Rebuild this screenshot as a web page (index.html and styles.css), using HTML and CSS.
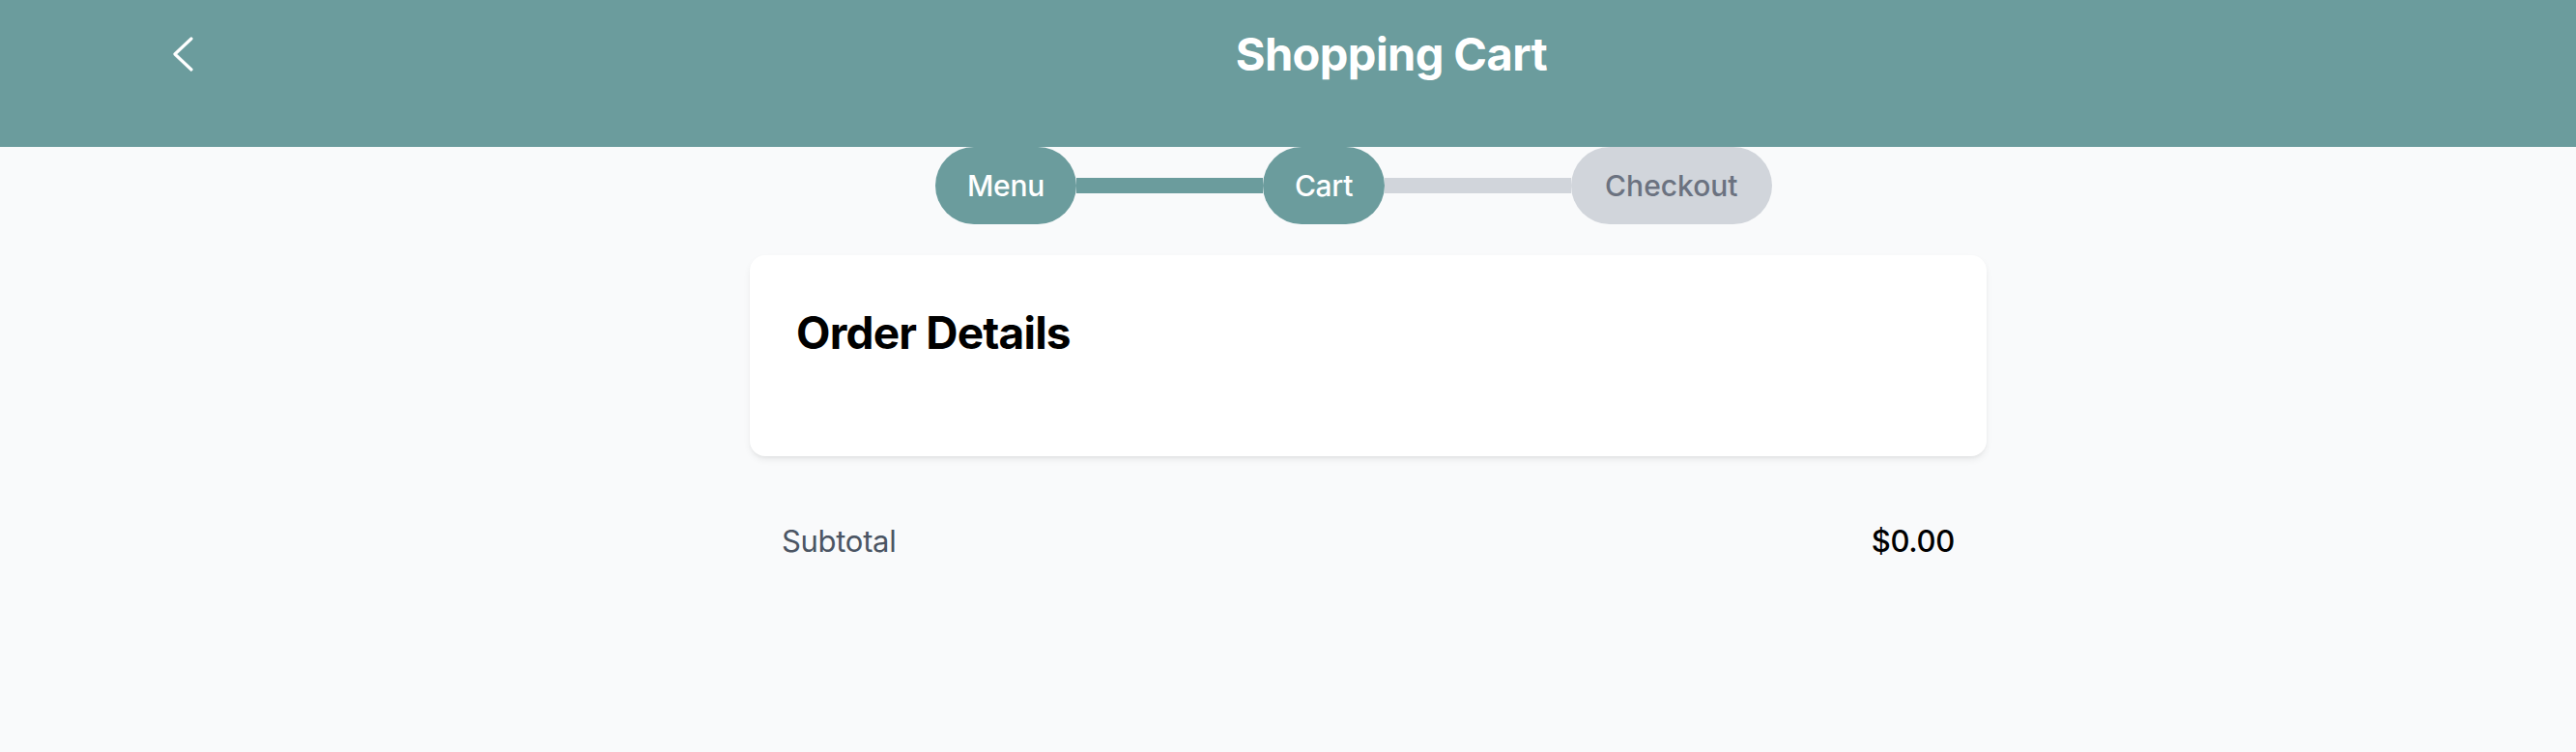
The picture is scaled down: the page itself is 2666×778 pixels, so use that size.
FILE: index.html
```html
<!DOCTYPE html>
<html lang="en">
<head>
<meta charset="utf-8">
<title>Shopping Cart</title>
<link rel="stylesheet" href="styles.css">
</head>
<body>
<header class="topbar">
  <div class="topbar-row">
    <button class="back-btn" aria-label="Back">
      <svg width="24" height="36" viewBox="0 0 24 36" fill="none" stroke="#fff" stroke-width="3.2" stroke-linecap="round" stroke-linejoin="round">
        <polyline points="20,2 3,18 20,34"/>
      </svg>
    </button>
    <h1 class="title">Shopping Cart</h1>
  </div>
</header>

<nav class="stepper">
  <span class="step step-done">Menu</span>
  <span class="bar bar-done"></span>
  <span class="step step-done">Cart</span>
  <span class="bar"></span>
  <span class="step step-todo">Checkout</span>
</nav>

<main class="content">
  <section class="card">
    <h2 class="card-title">Order Details</h2>
  </section>
  <div class="summary-row">
    <span class="summary-label">Subtotal</span>
    <span class="summary-value">$0.00</span>
  </div>
</main>
</body>
</html>
```

FILE: styles.css
```css
* { box-sizing: border-box; }

html, body {
  margin: 0;
  padding: 0;
}

body {
  background: #f9fafb;
  font-family: Inter, "Noto Sans", "Liberation Sans", sans-serif;
  color: #000;
  min-height: 778px;
}

.topbar {
  background: #6b9c9d;
  height: 152px;
  padding-top: 24px;
}

.topbar-row {
  display: flex;
  align-items: center;
  height: 64px;
  padding-left: 162px;
}

.back-btn {
  width: 52px;
  height: 64px;
  border: 0;
  background: transparent;
  padding: 0 0 0 3px;
  display: flex;
  align-items: center;
  justify-content: center;
  cursor: pointer;
}

.title {
  flex: 1;
  margin: 0;
  text-align: center;
  color: #fff;
  font-size: 47px;
  font-weight: 700;
  line-height: 64px;
  letter-spacing: -0.6px;
}

.stepper {
  display: flex;
  align-items: center;
  margin-left: 968px;
}

.step {
  height: 80px;
  padding: 0 33px;
  border-radius: 40px;
  display: flex;
  align-items: center;
  font-size: 30px;
  font-weight: 500;
  letter-spacing: -0.3px;
}

.step-done {
  background: #6b9c9d;
  color: #fff;
}

.step-todo {
  background: #d1d5db;
  color: #6b7280;
  padding: 0 35px;
  letter-spacing: 0;
}

.bar {
  width: 193px;
  height: 16px;
  background: #d1d5db;
}

.bar-done {
  background: #6b9c9d;
}

.content {
  width: 1280px;
  margin-left: 776px;
  padding-top: 32px;
}

.card {
  background: #fff;
  border-radius: 16px;
  padding: 48px 48px 96px;
  box-shadow: 0 4px 8px -2px rgba(0, 0, 0, 0.1), 0 2px 4px -2px rgba(0, 0, 0, 0.06);
}

.card-title {
  margin: 0;
  font-size: 46px;
  font-weight: 700;
  line-height: 64px;
  letter-spacing: -0.8px;
}

.summary-row {
  display: flex;
  justify-content: space-between;
  align-items: center;
  padding: 64px 33px 0;
  line-height: 48px;
}

.summary-label {
  font-size: 31px;
  color: #4b5563;
  letter-spacing: -0.3px;
}

.summary-value {
  font-size: 31px;
  font-weight: 500;
  color: #000;
  letter-spacing: -0.3px;
}
```
